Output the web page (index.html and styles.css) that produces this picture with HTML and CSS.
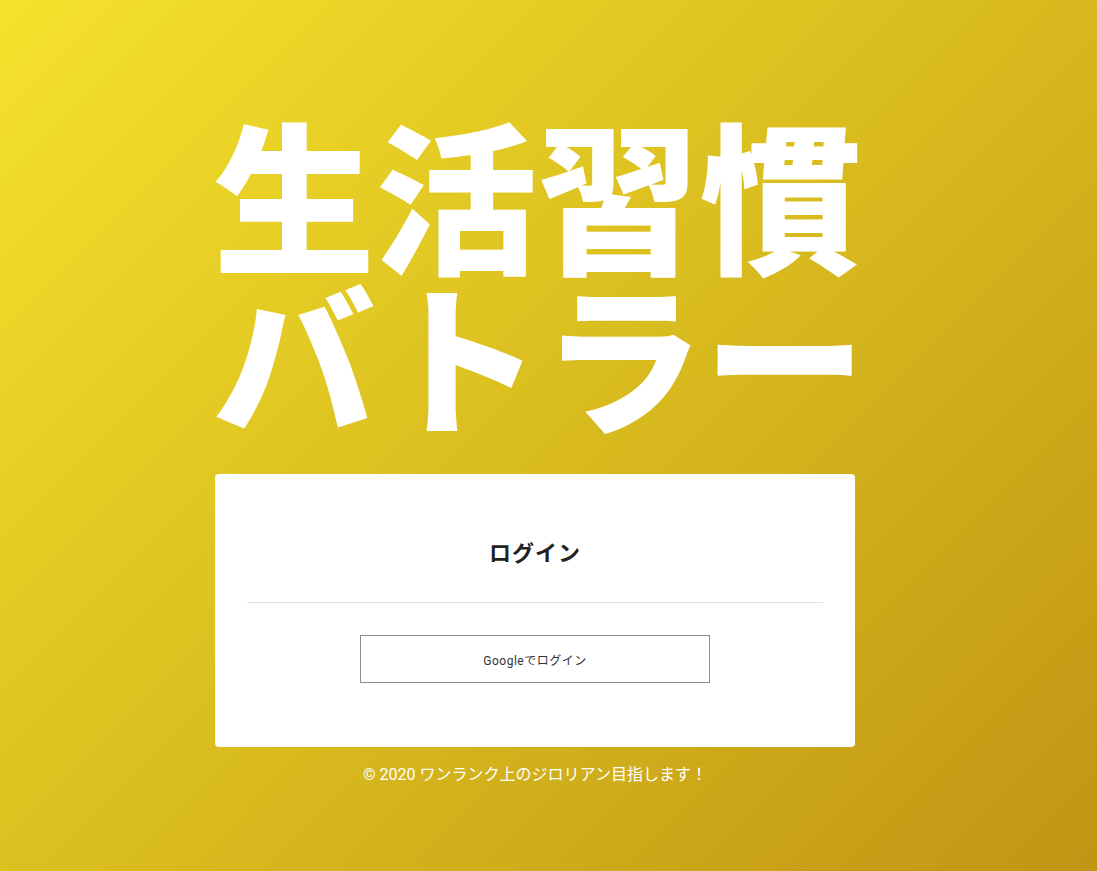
FILE: index.html
```html
<!DOCTYPE html>
<html lang="ja">
<head>
<meta charset="utf-8">
<title>生活習慣バトラー</title>
<link rel="stylesheet" href="styles.css">
</head>
<body>
<div class="page">
  <main class="wrap">
    <h1 class="title">生活習慣<br>バトラー</h1>
    <section class="card">
      <h2 class="card-title">ログイン</h2>
      <hr class="divider">
      <div class="actions">
        <button class="google-btn" type="button">Googleでログイン</button>
      </div>
    </section>
    <footer class="footer">© 2020 ワンランク上のジロリアン目指します！</footer>
  </main>
</div>
</body>
</html>
```
FILE: styles.css
```css
html, body {
  margin: 0;
  padding: 0;
  height: 100%;
}
body {
  font-family: Roboto, "Noto Sans CJK JP", sans-serif;
  background: linear-gradient(135deg, #f5e22c 0%, #dcc020 45%, #c09514 100%);
  min-height: 871px;
}
.page {
  min-height: 871px;
  display: flex;
}
.wrap {
  width: 640px;
  margin-left: 215px;
  padding-top: 111px;
  display: flex;
  flex-direction: column;
}
.title {
  margin: 0 0 0 -2px;
  height: 320px;
  color: #fff;
  font-family: "Noto Sans CJK JP", sans-serif;
  font-weight: 900;
  font-size: 162px;
  line-height: 161px;
  letter-spacing: 0;
  white-space: nowrap;
}
.card {
  margin-top: 43px;
  background: #fff;
  border-radius: 4px;
  padding: 32px 32px 64px;
  box-sizing: border-box;
  height: 273px;
}
.card-title {
  margin: 0;
  padding-top: 30px;
  text-align: center;
  font-family: "Noto Sans CJK JP", sans-serif;
  font-weight: 700;
  font-size: 22px;
  line-height: 30px;
  letter-spacing: 1px;
  color: #222;
}
.divider {
  margin: 36px 0 0;
  border: 0;
  border-top: 1px solid #e0e0e0;
}
.actions {
  display: flex;
  justify-content: center;
  margin-top: 32px;
}
.google-btn {
  width: 350px;
  height: 48px;
  background: #fff;
  border: 1px solid #8c8c8c;
  border-radius: 0;
  font-family: Roboto, "Noto Sans CJK JP", sans-serif;
  font-size: 12px;
  color: #333;
  letter-spacing: 0.5px;
  cursor: pointer;
}
.footer {
  margin-top: 18px;
  text-align: center;
  color: #fff;
  font-size: 16px;
  line-height: 20px;
}
```
